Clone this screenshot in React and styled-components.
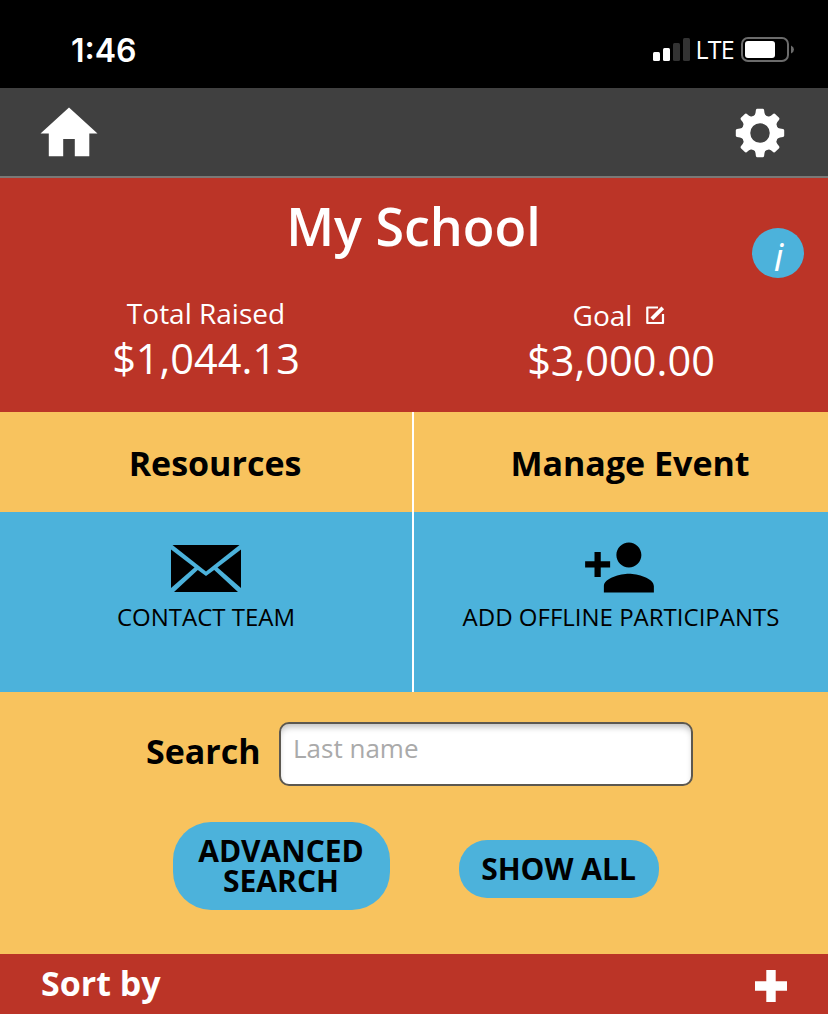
import styled, { createGlobalStyle } from 'styled-components'
import { MdPersonAdd } from 'react-icons/md'

const COLORS = {
    red: '#bb3427',
    yellow: '#f8c35e',
    blue: '#4cb2db',
    gray: '#404040',
}

const GlobalStyle = createGlobalStyle`
    * {
        box-sizing: border-box;
    }

    body {
        margin: 0;
        background-color: #fff;
        font-family: "Open Sans", "Noto Sans", sans-serif;
    }
`

const Screen = styled.div`
    width: 828px;
    height: 1025px;
    overflow: hidden;
    background-color: #fff;

    svg {
        display: block;
    }
`

const StatusBar = styled.div`
    height: 88px;
    padding: 12px 34px 0 71px;
    display: flex;
    justify-content: space-between;
    align-items: center;
    background-color: #000;
    color: #fff;
`

const Clock = styled.span`
    padding-top: 1px;
    font-family: Inter, sans-serif;
    font-size: 32px;
    font-weight: 600;
    line-height: 40px;
`

const StatusIcons = styled.div`
    display: flex;
    align-items: center;
`

const Network = styled.span`
    margin: -2px 7px 0 4px;
    font-size: 25px;
    font-weight: 500;
    line-height: 34px;
    letter-spacing: -0.7px;
`

const NavBar = styled.div`
    height: 90px;
    padding: 19px 43px 0 40px;
    display: flex;
    justify-content: space-between;
    align-items: flex-start;
    background-color: ${COLORS.gray};
    border-bottom: 2px solid #7b7876;
`

const Summary = styled.div`
    position: relative;
    height: 234px;
    background-color: ${COLORS.red};
    color: #fff;
`

const Title = styled.h1`
    margin: 0;
    padding-right: 1px;
    font-size: 52px;
    font-weight: 600;
    line-height: 96px;
    text-align: center;
`

const InfoBadge = styled.button`
    position: absolute;
    right: 24px;
    top: 50px;
    width: 52px;
    height: 50px;
    padding: 6px 0 0 1px;
    border: none;
    border-radius: 50%;
    background-color: ${COLORS.blue};
    color: #fff;
    font-family: inherit;
    font-size: 38px;
    font-style: italic;
    font-weight: 500;
    line-height: 44px;
`

const Columns = styled.div`
    display: grid;
    grid-template-columns: 412px 414px;
    column-gap: 2px;
    background-color: ${p => p.divider || 'transparent'};
`

const Stat = styled.div`
    padding-top: ${p => p.top}px;
    text-align: center;
`

const StatLabel = styled.div`
    display: flex;
    justify-content: center;
    align-items: center;
    gap: 14px;
    padding: 1px ${p => p.shift || 0}px 0 0;
    font-size: 28px;
    line-height: 45px;
`

const StatValue = styled.div`
    font-size: 41.5px;
    line-height: 45px;
`

const TabTitle = styled.h2`
    margin: 0;
    padding: 1px 0 0 18px;
    height: 100px;
    background-color: ${COLORS.yellow};
    color: #000;
    font-size: 34px;
    font-weight: 700;
    line-height: 100px;
    text-align: center;
`

const Action = styled.div`
    height: 180px;
    display: flex;
    flex-direction: column;
    align-items: center;
    background-color: ${COLORS.blue};
    color: #000;
`

const ActionIcon = styled.div`
    height: 90px;
    padding: ${p => p.top}px ${p => p.shift || 0}px 0 0;
`

const ActionLabel = styled.div`
    font-size: 24px;
    line-height: 30px;
    white-space: nowrap;
`

const SearchPanel = styled.div`
    height: 262px;
    padding-top: 30px;
    background-color: ${COLORS.yellow};
`

const SearchRow = styled.div`
    display: flex;
    padding-left: 146px;
`

const SearchLabel = styled.label`
    width: 133px;
    font-size: 34px;
    font-weight: 700;
    line-height: 59px;
`

const SearchInput = styled.input`
    width: 414px;
    height: 64px;
    padding: 0 12px 12px;
    border: 2px solid #5c5850;
    border-radius: 10px;
    background-color: #fff;
    box-shadow: inset 0 5px 6px -2px rgba(0, 0, 0, 0.25);
    font-family: inherit;
    font-size: 26px;

    &::placeholder {
        color: #aaa;
        opacity: 1;
    }
`

const ButtonRow = styled.div`
    display: flex;
    align-items: flex-start;
    gap: 69px;
    padding: 36px 0 0 173px;
`

const PillButton = styled.button`
    width: ${p => p.width}px;
    height: ${p => p.height}px;
    margin: ${p => p.offset || 0}px 0 0;
    padding: 0 1px 0 0;
    border: none;
    border-radius: ${p => p.radius}px;
    background-color: ${COLORS.blue};
    color: #000;
    font-family: inherit;
    font-size: 30px;
    font-weight: 700;
    line-height: 30px;
    cursor: pointer;
`

const SortBar = styled.div`
    height: 60px;
    padding: 0 41px;
    display: flex;
    justify-content: space-between;
    background-color: ${COLORS.red};
    color: #fff;
    font-size: 34px;
    font-weight: 700;
    line-height: 58px;

    svg {
        margin-top: 16px;
    }
`

const TEETH = [0, 45, 90, 135, 180, 225, 270, 315]

function SignalIcon() {
    return (
        <svg width="38" height="24" viewBox="0 0 38 24">
            <rect x="0" y="14" width="7" height="9" rx="1.5" fill="#fff" />
            <rect x="10" y="10" width="7" height="13" rx="1.5" fill="#fff" />
            <rect x="20" y="5" width="7" height="18" rx="1.5" fill="#333" />
            <rect x="30" y="0" width="7" height="23" rx="1.5" fill="#333" />
        </svg>
    )
}

function BatteryIcon() {
    return (
        <svg width="53" height="26" viewBox="0 0 53 26">
            <rect x="1" y="1" width="46" height="23" rx="6" fill="none" stroke="#6b6b6b" strokeWidth="2" />
            <rect x="4" y="4" width="30" height="17" rx="3" fill="#fff" />
            <path d="M50 8.5q3 1.5 3 4t-3 4z" fill="#6b6b6b" />
        </svg>
    )
}

function HomeIcon() {
    return (
        <svg width="58" height="50" viewBox="0 0 58 50">
            <path d="M29 .5L57.500 26.500H49.300V49.300H34.800V32H23.200V49.300H8.800V26.500H.5z" fill="#fff" />
        </svg>
    )
}

function GearIcon() {
    return (
        <svg width="50" height="52" viewBox="-25 -26 50 52">
            <circle r="14" fill="none" stroke="#fff" strokeWidth="8.500" />
            {TEETH.map(a => (
                <path key={a} transform={`rotate(${a})`} fill="#fff"
                    d="M-7.500 -15.500Q-5 -17.500 -4.500 -20L-4.100 -23Q-3.800 -24.200 -2.800 -24.200H2.800Q3.800 -24.200 4.100 -23L4.500 -20Q5 -17.500 7.500 -15.500z" />
            ))}
        </svg>
    )
}

function EditIcon() {
    return (
        <svg width="19" height="19" viewBox="0 0 19 19" fill="none" stroke="#fff">
            <path d="M12 1.500H1.300V17H17V8" strokeWidth="2.200" strokeLinejoin="round" />
            <path d="M5.800 12.800L16.800 1.800" strokeWidth="3.800" />
        </svg>
    )
}

function MailIcon() {
    return (
        <svg width="70" height="47" viewBox="0 0 70 47" fill="#000">
            <path d="M1.500 0H68.500L35 26.500z" />
            <path d="M0 4.500L23.500 22.500L0 43z" />
            <path d="M70 4.500V43L46.500 22.500z" />
            <path d="M3 47L26.800 25L35 31L43.200 25L67 47z" />
        </svg>
    )
}

function PlusIcon() {
    return (
        <svg width="32" height="32" viewBox="0 0 32 32">
            <path d="M11.300 0H20.700V11.300H32V20.700H20.700V32H11.300V20.700H0V11.300H11.300z" fill="#fff" />
        </svg>
    )
}

function App() {
    return (
        <Screen>
            <GlobalStyle />
            <StatusBar>
                <Clock>1:46</Clock>
                <StatusIcons>
                    <SignalIcon />
                    <Network>LTE</Network>
                    <BatteryIcon />
                </StatusIcons>
            </StatusBar>
            <NavBar>
                <HomeIcon />
                <GearIcon />
            </NavBar>
            <Summary>
                <Title>My School</Title>
                <InfoBadge>i</InfoBadge>
                <Columns>
                    <Stat top={16}>
                        <StatLabel>Total Raised</StatLabel>
                        <StatValue>$1,044.13</StatValue>
                    </Stat>
                    <Stat top={18}>
                        <StatLabel shift={4}>Goal <EditIcon /></StatLabel>
                        <StatValue>$3,000.00</StatValue>
                    </Stat>
                </Columns>
            </Summary>
            <Columns divider="#fff">
                <TabTitle>Resources</TabTitle>
                <TabTitle>Manage Event</TabTitle>
            </Columns>
            <Columns divider="#fff">
                <Action>
                    <ActionIcon top={33}><MailIcon /></ActionIcon>
                    <ActionLabel>CONTACT TEAM</ActionLabel>
                </Action>
                <Action>
                    <ActionIcon top={18} shift={4}><MdPersonAdd size={75} /></ActionIcon>
                    <ActionLabel>ADD OFFLINE PARTICIPANTS</ActionLabel>
                </Action>
            </Columns>
            <SearchPanel>
                <SearchRow>
                    <SearchLabel htmlFor="last-name">Search</SearchLabel>
                    <SearchInput id="last-name" placeholder="Last name" />
                </SearchRow>
                <ButtonRow>
                    <PillButton width={217} height={88} radius={38}>ADVANCED<br />SEARCH</PillButton>
                    <PillButton width={200} height={58} radius={28} offset={18}>SHOW ALL</PillButton>
                </ButtonRow>
            </SearchPanel>
            <SortBar>
                <span>Sort by</span>
                <PlusIcon />
            </SortBar>
        </Screen>
    )
}

export default App
